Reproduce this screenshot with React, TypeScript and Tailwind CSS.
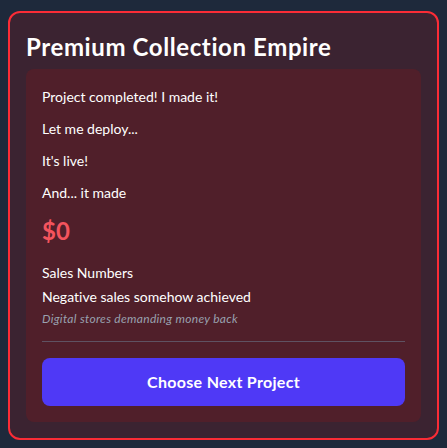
export default function App() {
  return (
    <div className="min-h-screen bg-[#1e293b] p-2 pt-[11px]" style={{ fontFamily: 'Lato, sans-serif', fontVariantLigatures: 'none' }}>
      <div className="rounded-xl border-2 border-red-500 bg-red-900/30 p-4">
        <h2 className="mt-[2px] mb-[6px] text-2xl font-bold tracking-[0.6px] text-white">Premium Collection Empire</h2>
        <div className="rounded-lg bg-red-900/30 px-4 pt-[18px] pb-4">
          <p className="mb-3 text-sm text-white">Project completed! I made it!</p>
          <p className="mb-3 text-sm text-white">Let me deploy...</p>
          <p className="mb-3 text-sm text-white">It's live!</p>
          <p className="mb-3 text-sm text-white">And... it made</p>
          <p className="mb-4 text-2xl font-bold text-[#f4545e]">$0</p>
          <p className="text-sm text-white">Sales Numbers</p>
          <p className="mt-1 text-sm text-white">Negative sales somehow achieved</p>
          <p className="mt-1 text-xs italic tracking-[0.3px] text-gray-400">Digital stores demanding money back</p>
          <div className="mt-[14px] border-t border-[#5f5262]" />
          <button className="mt-4 h-12 w-full rounded-lg bg-indigo-600 text-base font-bold tracking-[0.3px] text-white">
            Choose Next Project
          </button>
        </div>
      </div>
    </div>
  );
}
